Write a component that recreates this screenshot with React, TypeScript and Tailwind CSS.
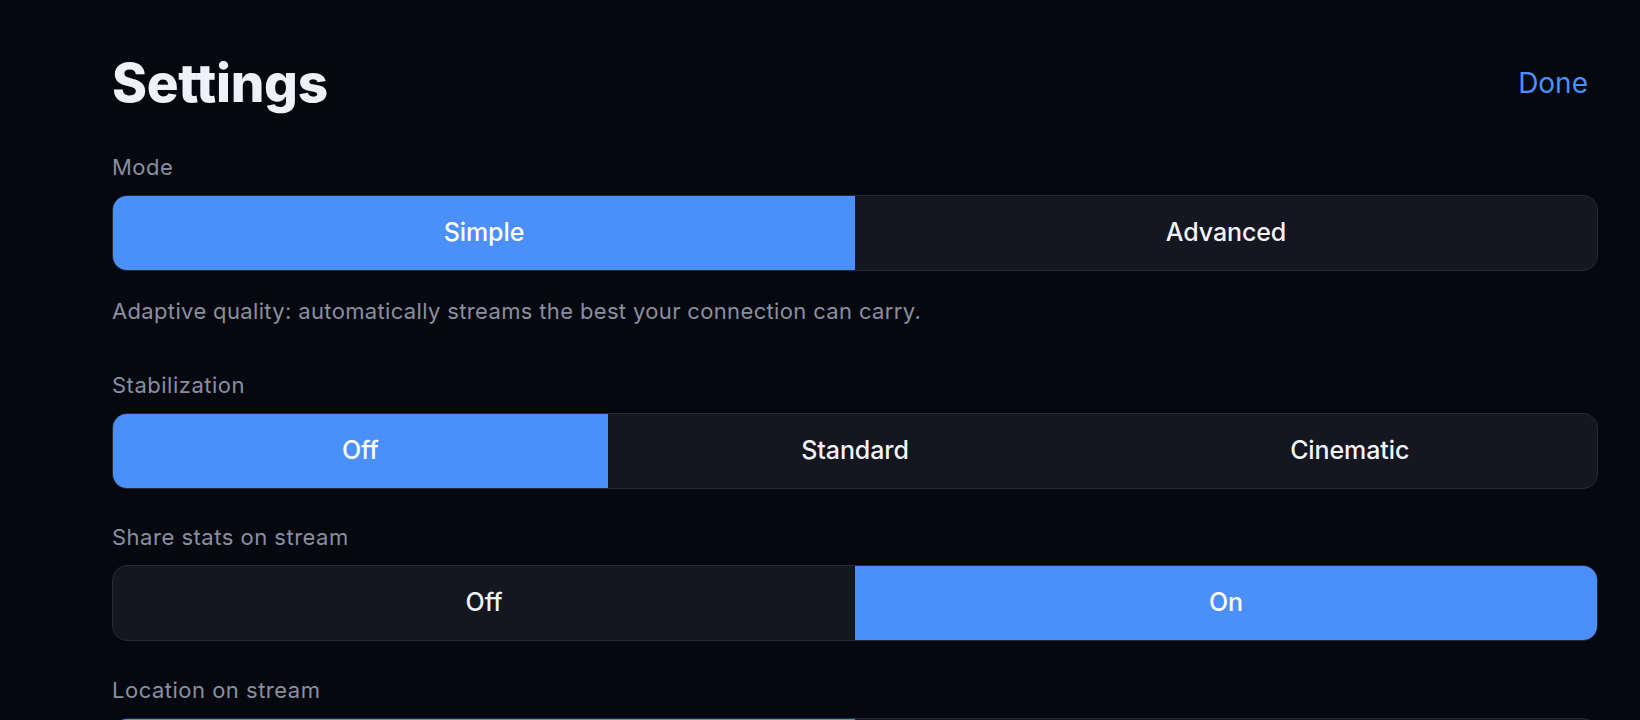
import { useState } from "react";

type Option = { value: string; label: string };

type SegmentedProps = {
  options: Option[];
  value: string;
  onChange: (v: string) => void;
};

function Segmented({ options, value, onChange }: SegmentedProps) {
  return (
    <div className="flex h-[76px] w-full overflow-hidden rounded-[15px] border border-[#262a38] bg-[#141620]">
      {options.map((o) => {
        const active = o.value === value;
        return (
          <button
            key={o.value}
            type="button"
            onClick={() => onChange(o.value)}
            className={`flex-1 text-[25px] font-medium tracking-[-0.1px] ${
              active ? "bg-[#4b8ffb] text-white" : "text-[#f1f3f8]"
            }`}
          >
            {o.label}
          </button>
        );
      })}
    </div>
  );
}

function Label({ children }: { children: React.ReactNode }) {
  return (
    <div className="mb-[14px] text-[22px] leading-[28px] tracking-[0.5px] text-[#8a8fa0]">
      {children}
    </div>
  );
}

const offOn: Option[] = [
  { value: "off", label: "Off" },
  { value: "on", label: "On" },
];

export default function App() {
  const [mode, setMode] = useState("simple");
  const [stab, setStab] = useState("off");
  const [stats, setStats] = useState("on");
  const [location, setLocation] = useState("off");

  return (
    <div
      className="h-[720px] overflow-hidden bg-[#05080f] pt-[53px] pl-[112px] pr-[42px]"
      style={{ fontFamily: "Inter, 'Noto Sans', sans-serif" }}
    >
      <div className="flex items-center justify-between">
        <h1 className="text-[53px] font-extrabold leading-[60px] tracking-[-0.3px] text-[#eef1f8]">
          Settings
        </h1>
        <button
          type="button"
          className="mr-[10px] text-[28px] leading-[36px] text-[#4b8ffb]"
        >
          Done
        </button>
      </div>

      <div className="mt-[40px]">
        <Label>Mode</Label>
        <Segmented
          options={[
            { value: "simple", label: "Simple" },
            { value: "advanced", label: "Advanced" },
          ]}
          value={mode}
          onChange={setMode}
        />
        <p className="mt-[26px] text-[22px] leading-[28px] tracking-[0.35px] text-[#8a8fa0]">
          Adaptive quality: automatically streams the best your connection can
          carry.
        </p>
      </div>

      <div className="mt-[46px]">
        <Label>Stabilization</Label>
        <Segmented
          options={[
            { value: "off", label: "Off" },
            { value: "standard", label: "Standard" },
            { value: "cinematic", label: "Cinematic" },
          ]}
          value={stab}
          onChange={setStab}
        />
      </div>

      <div className="mt-[34px]">
        <Label>Share stats on stream</Label>
        <Segmented options={offOn} value={stats} onChange={setStats} />
      </div>

      <div className="mt-[35px]">
        <Label>Location on stream</Label>
        <Segmented options={offOn} value={location} onChange={setLocation} />
      </div>
    </div>
  );
}
